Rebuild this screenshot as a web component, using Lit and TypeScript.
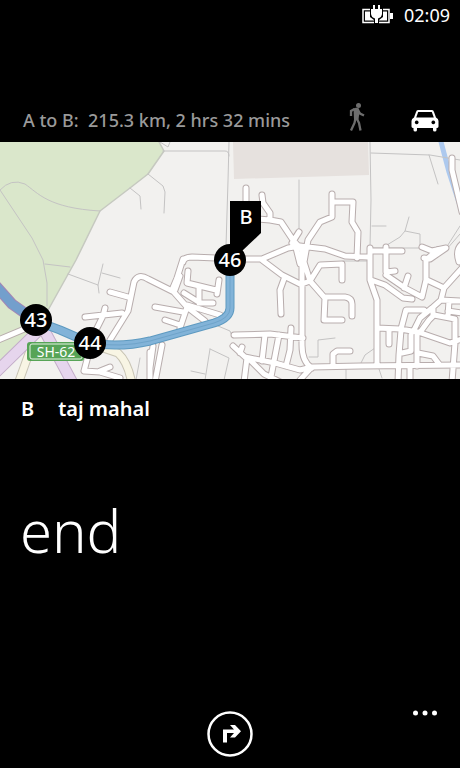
import { LitElement, html, css, svg } from "lit";
import { customElement, state } from "lit/decorators.js";

const STREETS = [
  "M183 259L177 278L172 290L187 307L205 321M187 307L180 328M155 307L183 312M165 320L180 325M187 305L220 315",
  "M183 262Q184 257 192 257L216 258M172 291L148 279Q138 273 134 282L128 311L110 340M110 292L128 297",
  "M85 317L122 313M105 308L103 316L96 330M88 356L84 371L100 372L120 378M100 371L110 367",
  "M153 346L150 368M162 345L155 382M150 352V382",
  "M188 271L187 283L216 290M219 280L217 294M199 286V303M184 293L200 303H213M180 276L175 290",
  "M234 335L270 334L303 338M233 346L245 357L275 363L300 370L312 367M242 347L240 353M265 335L262 361M279 335L270 382M291 328L290 350L286 366M247 358L244 382M250 360L264 374L280 382",
  "M244 259L262 259L288 248L300 246L325 249L345 256L368 257M262 260L282 275L300 284M284 279L280 290L281 314",
  "M246 188V202M262 195L263 203L270 213V220L258 219M270 220L281 222L293 240L300 248M292 243L299 232M296 248L300 264",
  "M302 250V284V345Q302 362 312 368M332 194V217L320 222L308 240L304 262L310 281M332 202H353L352 222L358 232L357 258",
  "M310 281L320 265L342 264V280M302 284L310 281L324 297H345Q352 298 352 304V316M325 298L324 320H342",
  "M370 248V280L377 300V366M370 251H402M386 247V272L395 271M312 367L360 366L462 365M333 366V354L337 351H350M300 380L311 368",
  "M371 280L385 285L403 298L412 299M386 275L405 288L422 297L426 280V260L437 250M422 247L432 251L446 248L430 259L424 258M408 276L404 288",
  "M427 280L444 288L462 268M444 288L441 300L432 308L420 318L413 332M441 300L462 301",
  "M377 328L400 329L418 332L450 343L462 339M401 329L406 310L424 310M389 330V344M401 330L399 355L398 382M417 333V366M418 353L433 356L439 364",
  "M421 331L429 320L434 315L455 319V343L452 382M433 315V308M449 301L448 316M448 311L462 313M402 353L411 351V335M410 368V382",
  "M452 158V170L462 212M462 244Q455 250 459 262",
];

const LANES =
  "M0 190Q11 178 25 184C38 193 48 208 100 211M0 190L32 238L43 260L47 283V306M45 264L70 267" +
  "M68 274L98 285L99 293M98 285L103 264M102 273L120 278M130 188L140 196L141 209M148 174L163 186L165 192L164 213" +
  "M163 151H225Q229 151 229 156M229 142L228 181L226 246M299 180V235M370 142L371 200L370 248M371 153L430 155L460 160" +
  "M429 155L438 184M372 226H386M409 217L405 231L420 234V248M405 231L400 237L387 245M370 248H446L460 226M446 250L460 234" +
  "M343 261H370M360 365L365 355L375 348M309 357H318V340L335 338M346 367V380M378 366L382 378" +
  "M218 326L230 331L233 338M210 349L229 358L224 380M210 349L205 380M191 371L205 374M140 358L136 380M160 142L168 147L170 142";

const ROUTE = "M-4 286L12 304L36 321L60 330L90 343Q120 348 150 341L214 323Q230 318 230 308V260";

@customElement("route-map")
class RouteMap extends LitElement {
  static styles = css`
    :host { display: block; }
    .map { display: block; width: 100%; height: auto; font-family: "Noto Sans", "Open Sans", sans-serif; }
    .line { fill: none; stroke-linecap: round; stroke-linejoin: round; }
    .casing { stroke: #b8adad; stroke-width: 7; }
    .street { stroke: #fff; stroke-width: 5; }
    .lane { stroke: #c4c3c3; stroke-width: 1; }
    .marker { font-size: 20px; font-weight: 500; fill: #fff; text-anchor: middle; }
    .shield { font-size: 14px; fill: #fff; text-anchor: middle; }
  `;

  private marker(x: number, y: number, label: string) {
    return svg`<circle cx=${x} cy=${y} r="16" fill="#000"></circle>
      <text class="marker" x=${x} y=${y + 7}>${label}</text>`;
  }

  render() {
    return html`
      <svg class="map" viewBox="0 142 460 237" role="img" aria-label="Route map">
        <rect y="142" width="460" height="237" fill="#f2f1ef"></rect>
        <path d="M0 142H159L164 151L148 174L130 188L100 211L76 260L47 312L36 330L0 372Z" fill="#dae7cb"></path>
        <path d="M159 142L164 151L148 174L130 188L100 211L76 260L47 312" class="line" stroke="#c6c9c0" stroke-width="1.5"></path>
        <path d="M233 142H368L369 175L234 179Z" fill="#e6e1de"></path>
        <path d="M440 138L449 172L464 218" class="line" stroke="#adc9ee" stroke-width="5"></path>
        <path d=${LANES} class="line lane"></path>
        <path d="M32 345L18 384M94 345L118 353Q128 362 132 384" class="line" stroke="#c8c4b4" stroke-width="9"></path>
        <path d="M32 345L18 384M94 345L118 353Q128 362 132 384" class="line" stroke="#f8f5e4" stroke-width="7"></path>
        <path d=${STREETS.join("") + "M-4 341L34 325"} class="line casing"></path>
        <path d=${STREETS.join("") + "M-4 341L34 325"} class="line street"></path>
        <path d="M36 333L-6 374M42 326L73 384" class="line" stroke="#c3adc9" stroke-width="12"></path>
        <path d="M36 333L-6 374M42 326L73 384" class="line" stroke="#e6d5ed" stroke-width="10"></path>
        <path d=${ROUTE} class="line" stroke="#5e9ac0" stroke-width="9"></path>
        <path d=${ROUTE} class="line" stroke="#82b3d8" stroke-width="7"></path>
        <path d="M90 343Q120 348 150 341L214 323Q230 318 230 308V260" class="line" stroke="#6fa4ca" stroke-width="1"></path>
        <path d="M-4 286L12 304L36 321" class="line" stroke="#a586b4" stroke-width="11"></path>
        <path d="M-4 286L12 304L36 321" class="line" stroke="#739fcc" stroke-width="9"></path>
        <rect x="27" y="342" width="57" height="19" rx="3" fill="#57a457"></rect>
        <rect x="30" y="344" width="52" height="15" rx="2" fill="none" stroke="#e6f2e4"></rect>
        <text class="shield" x="56" y="357">SH-62</text>
        ${this.marker(36, 320, "43")}
        ${this.marker(90, 343, "44")}
        ${this.marker(230, 260, "46")}
        <path d="M230 201H261V233L242 251H230Z" fill="#000"></path>
        <text class="marker" x="246" y="224">B</text>
      </svg>
    `;
  }
}

@customElement("app-root")
class AppRoot extends LitElement {
  @state() private mode: "walk" | "drive" = "drive";

  static styles = css`
    :host {
      display: flex;
      flex-direction: column;
      min-height: 100vh;
      box-sizing: border-box;
      background: #000;
      color: #fff;
      font-family: "Noto Sans", "Open Sans", sans-serif;
    }
    button {
      display: block;
      padding: 0;
      border: 0;
      background: none;
      color: inherit;
      cursor: pointer;
    }
    svg { display: block; }
    .status {
      display: flex;
      justify-content: flex-end;
      align-items: center;
      gap: 10px;
      padding-right: 10px;
      font-size: 18px;
      line-height: 30px;
    }
    .summary {
      display: flex;
      align-items: center;
      padding: 68px 20px 0 23px;
      color: #9a9a9a;
      font-size: 18px;
      font-weight: 500;
      line-height: 44px;
    }
    .trip { flex: 1; margin: 0; white-space: pre; }
    .modes { display: flex; gap: 42px; }
    .mode { color: #6d6d6d; }
    .mode[aria-pressed="true"] { color: #fff; }
    .place {
      display: flex;
      gap: 24px;
      margin: 0;
      padding: 18px 21px 0;
      font-size: 20px;
      line-height: 24px;
      font-weight: 600;
    }
    .step {
      margin: 0;
      padding: 70px 20px 0;
      font-size: 58px;
      line-height: 80px;
      font-weight: 300;
    }
    .bar {
      display: grid;
      grid-template-columns: 1fr auto 1fr;
      margin-top: auto;
      padding: 0 20px 10px;
    }
    .next { grid-column: 2; }
    .more { justify-self: end; align-self: start; }
  `;

  render() {
    return html`
      <header class="status">
        <svg width="32" height="20" viewBox="0 0 32 20" role="img" aria-label="Charging">
          <path d="M1 4.500H27V17.500H1Z" fill="none" stroke="#fff" stroke-width="1.500"></path>
          <rect x="28" y="8" width="3" height="6" fill="#fff"></rect>
          <path d="M3 6.500H25V15.500H3Z" fill="#fff"></path>
          <path d="M8 3H21V12L17 15V19H12V15L8 12Z" fill="#000"></path>
          <path d="M11 0H13V4H16V0H18V4H20V9Q19.500 12.500 16 13.500V18H13V13.500Q9.500 12.500 9 9V4H11Z" fill="#fff"></path>
        </svg>
        <time>02:09</time>
      </header>
      <section class="summary">
        <p class="trip">A to B:  215.3 km, 2 hrs 32 mins</p>
        <div class="modes">
          <button class="mode" aria-label="Walk" aria-pressed=${this.mode === "walk"} @click=${() => (this.mode = "walk")}>
            <svg width="24" height="34" viewBox="0 4 24 34">
              <circle cx="14.500" cy="6.500" r="2.500" fill="currentColor"></circle>
              <path d="M10.500 10L7 12V17M14 11.500L16 14.500L20 16.500M11.500 19L10.500 24L7 31.500M12.500 19L15 24L16.500 31.500" fill="none" stroke="currentColor" stroke-width="2.300"></path>
              <path d="M9.500 9.500Q12 8 15 9.500L15.500 13L14.500 20.500H10Z" fill="currentColor"></path>
            </svg>
          </button>
          <button class="mode" aria-label="Drive" aria-pressed=${this.mode === "drive"} @click=${() => (this.mode = "drive")}>
            <svg width="30" height="34" viewBox="0 0 30 34">
              <path fill="currentColor" fill-rule="evenodd" d="M8 7H22Q23.500 7 24 9L26 14.500Q28.500 15.500 28.500 18V23.500Q28.500 25 26.500 25V27Q26.500 28.500 24.700 28.500Q23 28.500 23 27V25H7V27Q7 28.500 5.300 28.500Q3.500 28.500 3.500 27V25Q1.500 25 1.500 23.500V18Q1.500 15.500 4 14.500L6 9Q6.500 7 8 7ZM8.200 9L6.200 14.500H23.800L21.800 9ZM6.700 17.500A1.900 1.900 0 1 0 6.710 17.500ZM23.300 17.500A1.900 1.900 0 1 0 23.310 17.500Z"></path>
            </svg>
          </button>
        </div>
      </section>
      <route-map></route-map>
      <p class="place"><span>B</span><span>taj mahal</span></p>
      <h1 class="step">end</h1>
      <footer class="bar">
        <button class="next" aria-label="Next step">
          <svg width="48" height="48" viewBox="0 0 48 48">
            <circle cx="24" cy="24" r="21.500" fill="none" stroke="#fff" stroke-width="2.500"></circle>
            <path d="M17 32.500V19.500H28L24 15H29L35 21.300L29 27.500H24L28 23H21V32.500Z" fill="#fff"></path>
          </svg>
        </button>
        <button class="more" aria-label="More">
          <svg width="30" height="6" viewBox="0 0 30 6">
            <circle cx="5.500" cy="3" r="2.500" fill="#fff"></circle>
            <circle cx="15" cy="3" r="2.500" fill="#fff"></circle>
            <circle cx="24.500" cy="3" r="2.500" fill="#fff"></circle>
          </svg>
        </button>
      </footer>
    `;
  }
}
